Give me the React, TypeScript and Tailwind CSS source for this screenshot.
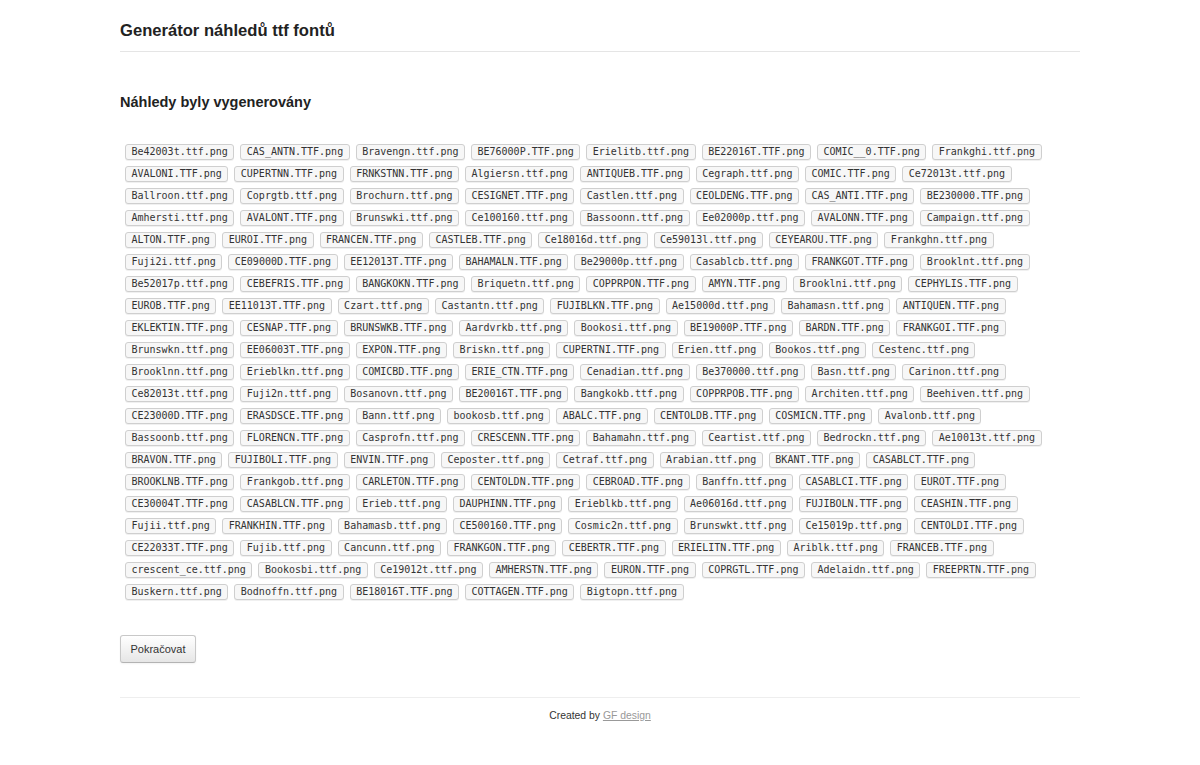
const files: string[] = [
  "Be42003t.ttf.png", "CAS_ANTN.TTF.png", "Bravengn.ttf.png", "BE76000P.TTF.png", "Erielitb.ttf.png", "BE22016T.TTF.png", "COMIC__0.TTF.png", "Frankghi.ttf.png",
  "AVALONI.TTF.png", "CUPERTNN.TTF.png", "FRNKSTNN.TTF.png", "Algiersn.ttf.png", "ANTIQUEB.TTF.png", "Cegraph.ttf.png", "COMIC.TTF.png", "Ce72013t.ttf.png",
  "Ballroon.ttf.png", "Coprgtb.ttf.png", "Brochurn.ttf.png", "CESIGNET.TTF.png", "Castlen.ttf.png", "CEOLDENG.TTF.png", "CAS_ANTI.TTF.png", "BE230000.TTF.png",
  "Amhersti.ttf.png", "AVALONT.TTF.png", "Brunswki.ttf.png", "Ce100160.ttf.png", "Bassoonn.ttf.png", "Ee02000p.ttf.png", "AVALONN.TTF.png", "Campaign.ttf.png",
  "ALTON.TTF.png", "EUROI.TTF.png", "FRANCEN.TTF.png", "CASTLEB.TTF.png", "Ce18016d.ttf.png", "Ce59013l.ttf.png", "CEYEAROU.TTF.png", "Frankghn.ttf.png",
  "Fuji2i.ttf.png", "CE09000D.TTF.png", "EE12013T.TTF.png", "BAHAMALN.TTF.png", "Be29000p.ttf.png", "Casablcb.ttf.png", "FRANKGOT.TTF.png", "Brooklnt.ttf.png",
  "Be52017p.ttf.png", "CEBEFRIS.TTF.png", "BANGKOKN.TTF.png", "Briquetn.ttf.png", "COPPRPON.TTF.png", "AMYN.TTF.png", "Brooklni.ttf.png", "CEPHYLIS.TTF.png",
  "EUROB.TTF.png", "EE11013T.TTF.png", "Czart.ttf.png", "Castantn.ttf.png", "FUJIBLKN.TTF.png", "Ae15000d.ttf.png", "Bahamasn.ttf.png", "ANTIQUEN.TTF.png",
  "EKLEKTIN.TTF.png", "CESNAP.TTF.png", "BRUNSWKB.TTF.png", "Aardvrkb.ttf.png", "Bookosi.ttf.png", "BE19000P.TTF.png", "BARDN.TTF.png", "FRANKGOI.TTF.png",
  "Brunswkn.ttf.png", "EE06003T.TTF.png", "EXPON.TTF.png", "Briskn.ttf.png", "CUPERTNI.TTF.png", "Erien.ttf.png", "Bookos.ttf.png", "Cestenc.ttf.png",
  "Brooklnn.ttf.png", "Erieblkn.ttf.png", "COMICBD.TTF.png", "ERIE_CTN.TTF.png", "Cenadian.ttf.png", "Be370000.ttf.png", "Basn.ttf.png", "Carinon.ttf.png",
  "Ce82013t.ttf.png", "Fuji2n.ttf.png", "Bosanovn.ttf.png", "BE20016T.TTF.png", "Bangkokb.ttf.png", "COPPRPOB.TTF.png", "Architen.ttf.png", "Beehiven.ttf.png",
  "CE23000D.TTF.png", "ERASDSCE.TTF.png", "Bann.ttf.png", "bookosb.ttf.png", "ABALC.TTF.png", "CENTOLDB.TTF.png", "COSMICN.TTF.png", "Avalonb.ttf.png",
  "Bassoonb.ttf.png", "FLORENCN.TTF.png", "Casprofn.ttf.png", "CRESCENN.TTF.png", "Bahamahn.ttf.png", "Ceartist.ttf.png", "Bedrockn.ttf.png", "Ae10013t.ttf.png",
  "BRAVON.TTF.png", "FUJIBOLI.TTF.png", "ENVIN.TTF.png", "Ceposter.ttf.png", "Cetraf.ttf.png", "Arabian.ttf.png", "BKANT.TTF.png", "CASABLCT.TTF.png",
  "BROOKLNB.TTF.png", "Frankgob.ttf.png", "CARLETON.TTF.png", "CENTOLDN.TTF.png", "CEBROAD.TTF.png", "Banffn.ttf.png", "CASABLCI.TTF.png", "EUROT.TTF.png",
  "CE30004T.TTF.png", "CASABLCN.TTF.png", "Erieb.ttf.png", "DAUPHINN.TTF.png", "Erieblkb.ttf.png", "Ae06016d.ttf.png", "FUJIBOLN.TTF.png", "CEASHIN.TTF.png",
  "Fujii.ttf.png", "FRANKHIN.TTF.png", "Bahamasb.ttf.png", "CE500160.TTF.png", "Cosmic2n.ttf.png", "Brunswkt.ttf.png", "Ce15019p.ttf.png", "CENTOLDI.TTF.png",
  "CE22033T.TTF.png", "Fujib.ttf.png", "Cancunn.ttf.png", "FRANKGON.TTF.png", "CEBERTR.TTF.png", "ERIELITN.TTF.png", "Ariblk.ttf.png", "FRANCEB.TTF.png",
  "crescent_ce.ttf.png", "Bookosbi.ttf.png", "Ce19012t.ttf.png", "AMHERSTN.TTF.png", "EURON.TTF.png", "COPRGTL.TTF.png", "Adelaidn.ttf.png", "FREEPRTN.TTF.png",
  "Buskern.ttf.png", "Bodnoffn.ttf.png", "BE18016T.TTF.png", "COTTAGEN.TTF.png", "Bigtopn.ttf.png",
];

// 8 per row, like the generated page
const rows: string[][] = [];
for (let i = 0; i < files.length; i += 8) rows.push(files.slice(i, i + 8));

const App = () => {
  return (
    <div className="min-h-[765px] bg-white text-[#333] font-['Liberation_Sans',Arial,sans-serif]">
      <div className="mx-auto w-[960px]">
        <div className="border-b border-[#e5e5e5] pt-[21px] pb-[10px]">
          <h1 className="text-[16.6px] leading-[20px] font-bold text-[#222]">
            Generátor náhledů ttf fontů
          </h1>
        </div>

        <h2 className="mt-[40px] text-[14.5px] leading-[20px] font-bold text-[#222]">
          Náhledy byly vygenerovány
        </h2>

        <div className="mt-[32px] flex flex-col gap-[6px] pl-[5px]">
          {rows.map((row, r) => (
            <div key={r} className="flex gap-[6px]">
              {row.map((name) => (
                <code
                  key={name}
                  className="h-[16px] whitespace-nowrap rounded-[3px] border border-[#cfcfcf] bg-[#f7f7f7] px-[5.5px] font-['DejaVu_Sans_Mono',monospace] text-[10px] leading-[14px] text-[#333] shadow-[0_1px_0_rgba(0,0,0,0.06)]"
                >
                  {name}
                </code>
              ))}
            </div>
          ))}
        </div>

        <button className="mt-[35px] h-[28px] w-[76px] rounded-[3px] border border-[#c8c8c8] border-b-[#b3b3b3] bg-gradient-to-b from-white to-[#e6e6e6] text-[11px] text-[#333] shadow-[inset_0_1px_0_rgba(255,255,255,0.2),0_1px_2px_rgba(0,0,0,0.05)]">
          Pokračovat
        </button>

        <div className="mt-[34px] border-t border-[#eee] pt-[11px] text-center text-[10.4px] leading-[14px] text-[#333]">
          Created by{" "}
          <a href="#" className="text-[#999] underline">
            GF design
          </a>
        </div>
      </div>
    </div>
  );
};

export default App;
